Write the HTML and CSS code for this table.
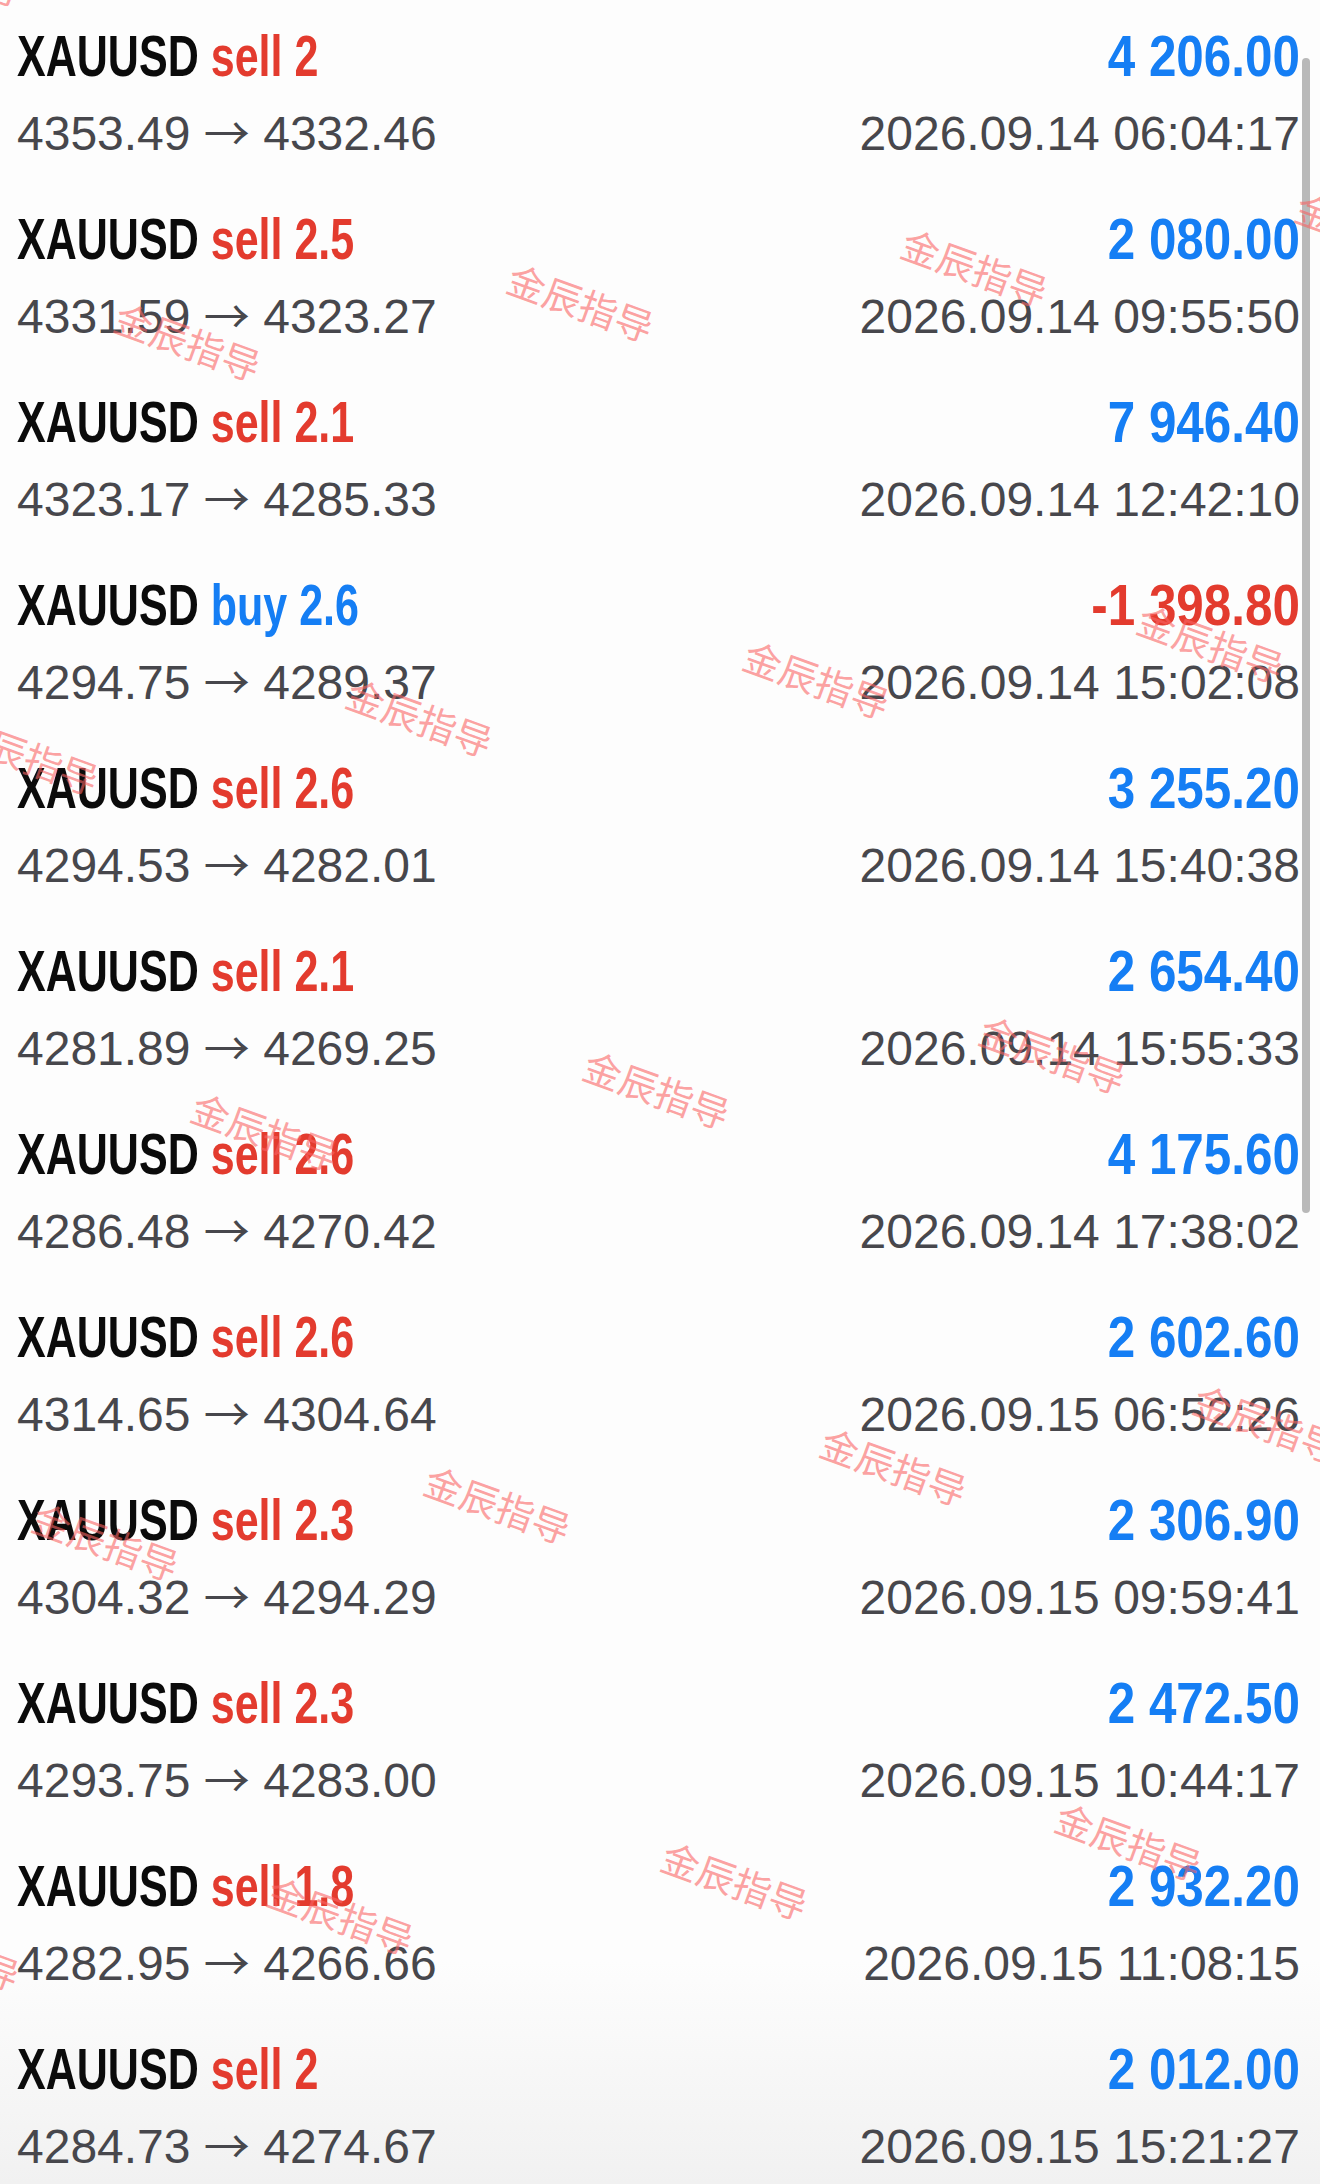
FILE: index.html
```html
<!DOCTYPE html>
<html lang="zh">
<head>
<meta charset="utf-8">
<title>History</title>
<link rel="stylesheet" href="styles.css">
</head>
<body>
<main class="page">
  <ul class="deals">
    <li class="deal">
      <div class="title"><span class="sq"><span class="sym">XAUUSD</span> <span class="sell">sell 2</span></span></div>
      <div class="profit"><span class="pq pos">4 206.00</span></div>
      <div class="prices">4353.49 <span class="arrow">→</span> 4332.46</div>
      <div class="time">2026.09.14 06:04:17</div>
    </li>
    <li class="deal">
      <div class="title"><span class="sq"><span class="sym">XAUUSD</span> <span class="sell">sell 2.5</span></span></div>
      <div class="profit"><span class="pq pos">2 080.00</span></div>
      <div class="prices">4331.59 <span class="arrow">→</span> 4323.27</div>
      <div class="time">2026.09.14 09:55:50</div>
    </li>
    <li class="deal">
      <div class="title"><span class="sq"><span class="sym">XAUUSD</span> <span class="sell">sell 2.1</span></span></div>
      <div class="profit"><span class="pq pos">7 946.40</span></div>
      <div class="prices">4323.17 <span class="arrow">→</span> 4285.33</div>
      <div class="time">2026.09.14 12:42:10</div>
    </li>
    <li class="deal">
      <div class="title"><span class="sq"><span class="sym">XAUUSD</span> <span class="buy">buy 2.6</span></span></div>
      <div class="profit"><span class="pq neg">-1 398.80</span></div>
      <div class="prices">4294.75 <span class="arrow">→</span> 4289.37</div>
      <div class="time">2026.09.14 15:02:08</div>
    </li>
    <li class="deal">
      <div class="title"><span class="sq"><span class="sym">XAUUSD</span> <span class="sell">sell 2.6</span></span></div>
      <div class="profit"><span class="pq pos">3 255.20</span></div>
      <div class="prices">4294.53 <span class="arrow">→</span> 4282.01</div>
      <div class="time">2026.09.14 15:40:38</div>
    </li>
    <li class="deal">
      <div class="title"><span class="sq"><span class="sym">XAUUSD</span> <span class="sell">sell 2.1</span></span></div>
      <div class="profit"><span class="pq pos">2 654.40</span></div>
      <div class="prices">4281.89 <span class="arrow">→</span> 4269.25</div>
      <div class="time">2026.09.14 15:55:33</div>
    </li>
    <li class="deal">
      <div class="title"><span class="sq"><span class="sym">XAUUSD</span> <span class="sell">sell 2.6</span></span></div>
      <div class="profit"><span class="pq pos">4 175.60</span></div>
      <div class="prices">4286.48 <span class="arrow">→</span> 4270.42</div>
      <div class="time">2026.09.14 17:38:02</div>
    </li>
    <li class="deal">
      <div class="title"><span class="sq"><span class="sym">XAUUSD</span> <span class="sell">sell 2.6</span></span></div>
      <div class="profit"><span class="pq pos">2 602.60</span></div>
      <div class="prices">4314.65 <span class="arrow">→</span> 4304.64</div>
      <div class="time">2026.09.15 06:52:26</div>
    </li>
    <li class="deal">
      <div class="title"><span class="sq"><span class="sym">XAUUSD</span> <span class="sell">sell 2.3</span></span></div>
      <div class="profit"><span class="pq pos">2 306.90</span></div>
      <div class="prices">4304.32 <span class="arrow">→</span> 4294.29</div>
      <div class="time">2026.09.15 09:59:41</div>
    </li>
    <li class="deal">
      <div class="title"><span class="sq"><span class="sym">XAUUSD</span> <span class="sell">sell 2.3</span></span></div>
      <div class="profit"><span class="pq pos">2 472.50</span></div>
      <div class="prices">4293.75 <span class="arrow">→</span> 4283.00</div>
      <div class="time">2026.09.15 10:44:17</div>
    </li>
    <li class="deal">
      <div class="title"><span class="sq"><span class="sym">XAUUSD</span> <span class="sell">sell 1.8</span></span></div>
      <div class="profit"><span class="pq pos">2 932.20</span></div>
      <div class="prices">4282.95 <span class="arrow">→</span> 4266.66</div>
      <div class="time">2026.09.15 11:08:15</div>
    </li>
    <li class="deal">
      <div class="title"><span class="sq"><span class="sym">XAUUSD</span> <span class="sell">sell 2</span></span></div>
      <div class="profit"><span class="pq pos">2 012.00</span></div>
      <div class="prices">4284.73 <span class="arrow">→</span> 4274.67</div>
      <div class="time">2026.09.15 15:21:27</div>
    </li>
  </ul>

  <div class="scrollbar"></div>

  <div class="marks" aria-hidden="true">
    <span class="wm" style="left:-47px;top:-33px">金辰指导</span>
    <span class="wm" style="left:975px;top:267px">金辰指导</span>
    <span class="wm" style="left:581px;top:302px">金辰指导</span>
    <span class="wm" style="left:188px;top:341px">金辰指导</span>
    <span class="wm" style="left:1369px;top:231px">金辰指导</span>
    <span class="wm" style="left:1211px;top:643px">金辰指导</span>
    <span class="wm" style="left:817px;top:679px">金辰指导</span>
    <span class="wm" style="left:420px;top:717px">金辰指导</span>
    <span class="wm" style="left:26px;top:755px">金辰指导</span>
    <span class="wm" style="left:1053px;top:1054px">金辰指导</span>
    <span class="wm" style="left:657px;top:1089px">金辰指导</span>
    <span class="wm" style="left:265px;top:1131px">金辰指导</span>
    <span class="wm" style="left:1267px;top:1423px">金辰指导</span>
    <span class="wm" style="left:894px;top:1466px">金辰指导</span>
    <span class="wm" style="left:498px;top:1504px">金辰指导</span>
    <span class="wm" style="left:106px;top:1541px">金辰指导</span>
    <span class="wm" style="left:1129px;top:1841px">金辰指导</span>
    <span class="wm" style="left:735px;top:1880px">金辰指导</span>
    <span class="wm" style="left:341px;top:1915px">金辰指导</span>
    <span class="wm" style="left:-53px;top:1951px">金辰指导</span>
  </div>
</main>
</body>
</html>
```

FILE: styles.css
```css
html, body {
  margin: 0;
  padding: 0;
  height: 2184px;
  overflow: hidden;
}

body {
  background: linear-gradient(to bottom, #fdfdfd 0, #fdfdfd 1960px, #f1f1f1 2184px);
  font-family: "Liberation Sans", Arial, sans-serif;
}

.page {
  position: relative;
  height: 2184px;
  overflow: hidden;
}

.deals {
  list-style: none;
  margin: 0;
  padding: 0;
}

.deal {
  display: grid;
  grid-template-columns: 1fr auto;
  grid-template-rows: 60px 95px;
  padding: 26px 20px 2px 17px;
  height: 183px;
  box-sizing: border-box;
}

.title,
.profit {
  font-size: 57px;
  line-height: 60px;
  font-weight: 700;
  white-space: nowrap;
}

.profit {
  text-align: right;
}

.sq {
  display: inline-block;
  transform: scaleX(0.755);
  transform-origin: left center;
  color: #0b0b0b;
}

.sell { color: #e33b2e; }
.buy  { color: #157ef4; }

.pq {
  display: inline-block;
  transform: scaleX(0.866);
  transform-origin: right center;
}

.pos { color: #157ef4; }
.neg { color: #e33b2e; }

.prices,
.time {
  font-size: 48px;
  line-height: 95px;
  color: #47474c;
  white-space: nowrap;
}

.arrow {
  font-family: "Noto Sans CJK SC", sans-serif;
  line-height: 1;
  font-size: 46px;
}

.time {
  text-align: right;
}

.scrollbar {
  position: absolute;
  top: 58px;
  right: 10px;
  width: 8px;
  height: 1155px;
  border-radius: 4px;
  background: #b9b9b9;
}

.marks {
  position: absolute;
  inset: 0;
  pointer-events: none;
}

.wm {
  position: absolute;
  font-family: "Noto Sans CJK SC", sans-serif;
  font-size: 38px;
  line-height: 1;
  color: rgba(250, 100, 100, 0.6);
  white-space: nowrap;
  transform: translate(-50%, -50%) rotate(20deg);
}
```
